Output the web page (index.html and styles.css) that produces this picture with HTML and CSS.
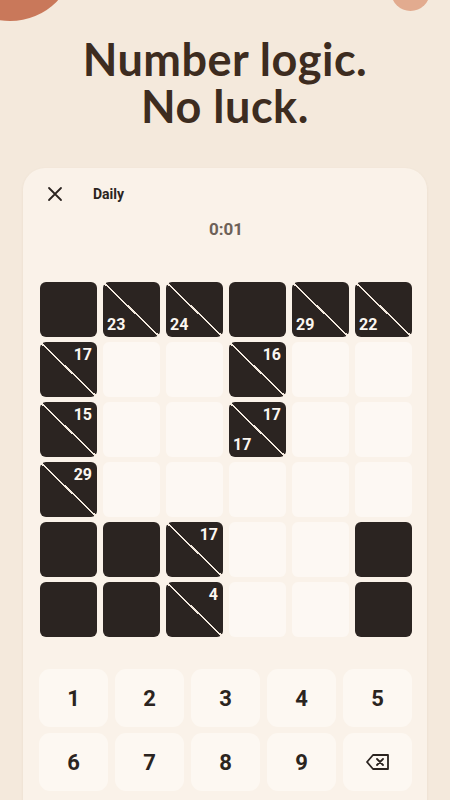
FILE: index.html
```html
<!DOCTYPE html>
<html lang="en">
<head>
  <meta charset="UTF-8">
  <meta name="viewport" content="width=device-width, initial-scale=1.0">
  <title>Kakuro Daily</title>
  <link rel="stylesheet" href="styles.css">
</head>
<body>
  <div class="blob blob-left"></div>
  <div class="blob blob-right"></div>

  <h1 class="headline">Number logic.<br>No luck.</h1>

  <div class="card">
    <div class="card-header">
      <button class="close-btn" aria-label="Close">
        <svg width="16" height="16" viewBox="0 0 16 16"><path d="M2 2 L14 14 M14 2 L2 14" stroke="#2b2420" stroke-width="1.8" stroke-linecap="round"/></svg>
      </button>
      <span class="mode">Daily</span>
    </div>
    <div class="timer">0:01</div>

    <div class="board">
      <!-- row 1 -->
      <div class="cell block"></div>
      <div class="cell clue"><span class="down">23</span></div>
      <div class="cell clue"><span class="down">24</span></div>
      <div class="cell block"></div>
      <div class="cell clue"><span class="down">29</span></div>
      <div class="cell clue"><span class="down">22</span></div>
      <!-- row 2 -->
      <div class="cell clue"><span class="across">17</span></div>
      <div class="cell open"></div>
      <div class="cell open"></div>
      <div class="cell clue"><span class="across">16</span></div>
      <div class="cell open"></div>
      <div class="cell open"></div>
      <!-- row 3 -->
      <div class="cell clue"><span class="across">15</span></div>
      <div class="cell open"></div>
      <div class="cell open"></div>
      <div class="cell clue"><span class="across">17</span><span class="down">17</span></div>
      <div class="cell open"></div>
      <div class="cell open"></div>
      <!-- row 4 -->
      <div class="cell clue"><span class="across">29</span></div>
      <div class="cell open"></div>
      <div class="cell open"></div>
      <div class="cell open"></div>
      <div class="cell open"></div>
      <div class="cell open"></div>
      <!-- row 5 -->
      <div class="cell block"></div>
      <div class="cell block"></div>
      <div class="cell clue"><span class="across">17</span></div>
      <div class="cell open"></div>
      <div class="cell open"></div>
      <div class="cell block"></div>
      <!-- row 6 -->
      <div class="cell block"></div>
      <div class="cell block"></div>
      <div class="cell clue"><span class="across">4</span></div>
      <div class="cell open"></div>
      <div class="cell open"></div>
      <div class="cell block"></div>
    </div>

    <div class="keypad">
      <button class="key">1</button>
      <button class="key">2</button>
      <button class="key">3</button>
      <button class="key">4</button>
      <button class="key">5</button>
      <button class="key">6</button>
      <button class="key">7</button>
      <button class="key">8</button>
      <button class="key">9</button>
      <button class="key" aria-label="Delete">
        <svg width="26" height="18" viewBox="0 0 26 18"><path d="M8 2 H23 V16 H8 L2 9 Z" fill="none" stroke="#2b2420" stroke-width="1.8" stroke-linejoin="round"/><path d="M12 6 L18 12 M18 6 L12 12" stroke="#2b2420" stroke-width="1.8" stroke-linecap="round"/></svg>
      </button>
    </div>
  </div>
</body>
</html>
```

FILE: styles.css
```css
body {
  margin: 0;
  background-color: #f4e9dc;
  color: #3b2b20;
  font-family: Roboto, "Noto Sans", sans-serif;
  overflow: hidden;
  height: 800px;
  position: relative;
}
.blob {
  position: absolute;
  border-radius: 50%;
}
.blob-left {
  width: 132px;
  height: 132px;
  left: -56px;
  top: -111px;
  background-color: #c9785a;
}
.blob-right {
  width: 39px;
  height: 39px;
  left: 391px;
  top: -28px;
  background-color: #e2ab8f;
}
.headline {
  margin: 0;
  padding-top: 36px;
  text-align: center;
  font-family: Lato, sans-serif;
  font-weight: 700;
  font-size: 45px;
  line-height: 47px;
  letter-spacing: 0.5px;
  color: #3d2c20;
}
.card {
  margin: 38px 23px 0;
  height: 700px;
  padding: 14px 15px 0 17px;
  background-color: #faf2e9;
  border-radius: 22px;
  box-shadow: 0 1px 3px rgba(120, 90, 60, 0.08);
}
.card-header {
  display: flex;
  align-items: center;
  height: 24px;
}
.close-btn {
  border: none;
  background: none;
  padding: 0;
  margin-left: 7px;
  width: 16px;
  height: 16px;
  display: flex;
}
.mode {
  margin-left: 30px;
  font-size: 14px;
  font-weight: 700;
  color: #2b2420;
}
.timer {
  margin-top: 13px;
  text-align: center;
  font-size: 17px;
  font-weight: 700;
  color: #6d6158;
}
.board {
  margin-top: 43px;
  display: grid;
  grid-template-columns: repeat(6, 57px);
  grid-auto-rows: 55px;
  gap: 5px 6px;
}
.cell {
  border-radius: 6px;
  position: relative;
  overflow: hidden;
}
.open {
  background-color: #fdf8f3;
}
.block {
  background-color: #2b2421;
}
.clue {
  background-color: #2b2421;
  background-image: linear-gradient(to top right, transparent calc(50% - 0.8px), #f3e9de calc(50% - 0.8px), #f3e9de calc(50% + 0.8px), transparent calc(50% + 0.8px));
}
.clue span {
  position: absolute;
  color: #fbf6f0;
  font-weight: 700;
  font-size: 16px;
  line-height: 16px;
}
.across {
  top: 5px;
  right: 5px;
}
.down {
  bottom: 4px;
  left: 4px;
}
.keypad {
  margin-top: 32px;
  display: grid;
  grid-template-columns: repeat(5, 69px);
  grid-auto-rows: 58px;
  gap: 6px 7px;
  margin-left: -1px;
}
.key {
  border: none;
  border-radius: 11px;
  background-color: #fdf8f2;
  font-family: Roboto, "Noto Sans", sans-serif;
  font-size: 22px;
  font-weight: 700;
  color: #2b2420;
  display: flex;
  align-items: center;
  justify-content: center;
  padding: 0;
}
```
